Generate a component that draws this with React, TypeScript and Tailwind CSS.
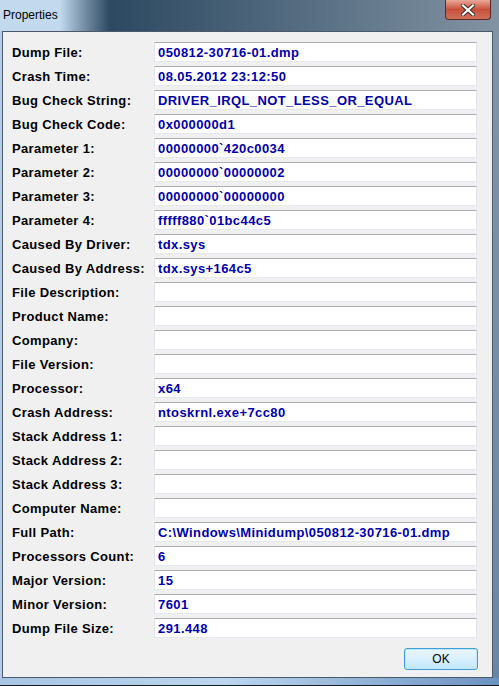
import React from 'react';

const rows: [string, string][] = [
  ['Dump File:', '050812-30716-01.dmp'],
  ['Crash Time:', '08.05.2012 23:12:50'],
  ['Bug Check String:', 'DRIVER_IRQL_NOT_LESS_OR_EQUAL'],
  ['Bug Check Code:', '0x000000d1'],
  ['Parameter 1:', '00000000`420c0034'],
  ['Parameter 2:', '00000000`00000002'],
  ['Parameter 3:', '00000000`00000000'],
  ['Parameter 4:', 'fffff880`01bc44c5'],
  ['Caused By Driver:', 'tdx.sys'],
  ['Caused By Address:', 'tdx.sys+164c5'],
  ['File Description:', ''],
  ['Product Name:', ''],
  ['Company:', ''],
  ['File Version:', ''],
  ['Processor:', 'x64'],
  ['Crash Address:', 'ntoskrnl.exe+7cc80'],
  ['Stack Address 1:', ''],
  ['Stack Address 2:', ''],
  ['Stack Address 3:', ''],
  ['Computer Name:', ''],
  ['Full Path:', 'C:\\Windows\\Minidump\\050812-30716-01.dmp'],
  ['Processors Count:', '6'],
  ['Major Version:', '15'],
  ['Minor Version:', '7601'],
  ['Dump File Size:', '291.448'],
];

const App: React.FC = () => {
  return (
    <div
      className="w-[499px] h-[686px] flex flex-col overflow-hidden bg-[#7d92a8]"
      style={{ fontFamily: '"Liberation Sans", Arial, sans-serif' }}
    >
      {/* Title bar */}
      <div className="h-[31px] shrink-0 relative bg-gradient-to-r from-[#c3d9ee] from-[12%] via-[#2c4961] via-[22%] to-[#8293a3]">
        <span className="absolute left-[3px] top-[8px] text-[12px] leading-[14px] text-black">Properties</span>
        {/* Close button */}
        <div className="absolute left-[445px] top-0 w-[46px] h-[20px] rounded-b-[4px] border border-t-0 border-[#5c2a24] bg-gradient-to-b from-[#e8a898] via-[#c8503a] via-50% to-[#d0705a] flex items-center justify-center">
          <svg width="14" height="12" viewBox="0 0 14 12">
            <path d="M2 1.5 L12 10.5 M12 1.5 L2 10.5" stroke="#3a2520" strokeWidth="4" strokeLinecap="square" />
            <path d="M2 1.5 L12 10.5 M12 1.5 L2 10.5" stroke="#ffffff" strokeWidth="2.2" strokeLinecap="square" />
          </svg>
        </div>
      </div>

      <div className="flex flex-1 min-h-0">
        {/* left frame */}
        <div className="w-[2px] shrink-0 bg-[#b5cde6]" />
        {/* client */}
        <div className="flex-1 border border-[#4a5a6a] bg-[#f0f0f0] flex flex-col pt-[10px] pl-[9px]">
          <div className="flex flex-col gap-[4px]">
            {rows.map(([label, value]) => (
              <div key={label} className="flex items-center h-[20px]">
                <div className="w-[142px] shrink-0 text-[13px] font-bold text-black leading-[15px] tracking-[0.35px] whitespace-nowrap">{label}</div>
                <div className="w-[323px] h-[20px] bg-white border border-[#e2e3ea] border-t-[#abadb3] border-b-[#e3e9ef] pl-[3px] flex items-center text-[13px] font-bold text-[#0000a8] leading-[15px] tracking-[0.4px] whitespace-nowrap">
                  {value}
                </div>
              </div>
            ))}
          </div>
          <div className="flex justify-end pr-[14px] mt-[10px]">
            <button className="w-[74px] h-[22px] rounded-[3px] border border-[#3c9fd8] bg-gradient-to-b from-[#eaf6fd] via-[#d9f0fc] via-50% to-[#bee6fd] text-[12px] text-black shadow-[inset_0_0_0_1px_#c4e5f6]">
              OK
            </button>
          </div>
        </div>
        {/* right frame */}
        <div className="w-[6px] shrink-0 bg-gradient-to-b from-[#8295a7] to-[#6a86a6]" />
      </div>

      {/* bottom frame */}
      <div className="h-[8px] shrink-0 bg-gradient-to-r from-[#a8c4e2] via-[#bcd6f0] via-[45%] to-[#6b93c0] border-b border-[#1a1a1a]" />
    </div>
  );
};

export default App;
